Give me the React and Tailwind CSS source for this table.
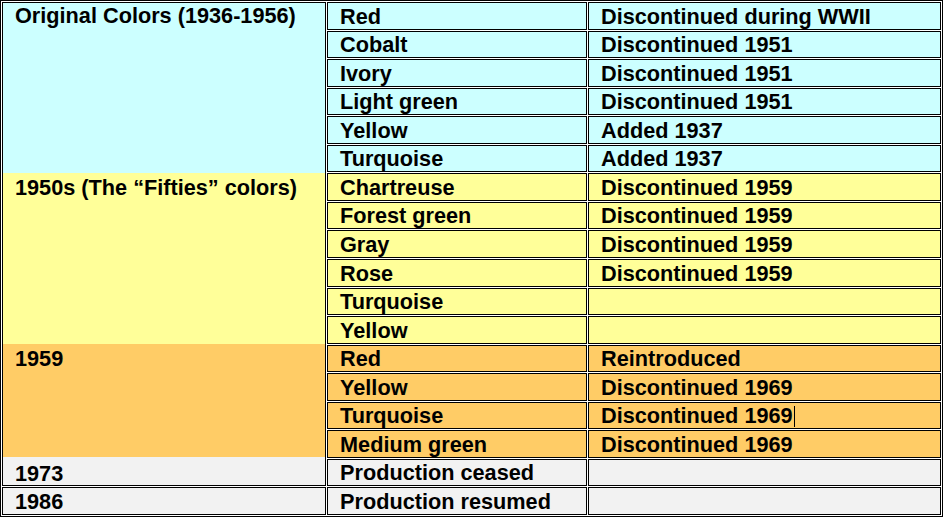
import React from "react";

const rows = [
  ["Red", "Discontinued during WWII", "b"],
  ["Cobalt", "Discontinued 1951", "b"],
  ["Ivory", "Discontinued 1951", "b"],
  ["Light green", "Discontinued 1951", "b"],
  ["Yellow", "Added 1937", "b"],
  ["Turquoise", "Added 1937", "b"],
  ["Chartreuse", "Discontinued 1959", "y"],
  ["Forest green", "Discontinued 1959", "y"],
  ["Gray", "Discontinued 1959", "y"],
  ["Rose", "Discontinued 1959", "y"],
  ["Turquoise", "", "y"],
  ["Yellow", "", "y"],
  ["Red", "Reintroduced", "o"],
  ["Yellow", "Discontinued 1969", "o"],
  ["Turquoise", "Discontinued 1969", "o", true],
  ["Medium green", "Discontinued 1969", "o"],
  ["Production ceased", "", "g"],
  ["Production resumed", "", "g"],
];

const bg = {
  b: "bg-[#ccffff]",
  y: "bg-[#ffff99]",
  o: "bg-[#ffcc66]",
  g: "bg-[#f2f2f2]",
};

function Cell({ children, color, cursor }) {
  return (
    <div className={`border border-black ${bg[color]} flex items-center px-3 pt-[2px] whitespace-nowrap`}>
      {children}
      {cursor && <span className="inline-block w-px h-[21px] bg-black ml-px" />}
    </div>
  );
}

function Seg({ color, grow, label, offset }) {
  return (
    <div className={`${bg[color]} ${grow} min-h-0`}>
      <div className={`h-[25.5px] flex items-center px-3 pt-[2px] whitespace-nowrap ${offset}`}>{label}</div>
    </div>
  );
}

export default function App() {
  return (
    <div className="w-[945px] h-[521px] bg-white">
      <div
        className="w-[943px] h-[517px] border border-black p-px bg-white text-black font-bold text-[21.7px]"
        style={{ fontFamily: '"Liberation Sans", Arial, sans-serif' }}
      >
        <div className="grid h-full grid-cols-[324px_260px_353px] grid-rows-[repeat(18,minmax(0,1fr))] gap-px">
          <div className="col-start-1 row-start-1 row-span-17 border border-black flex flex-col">
            <Seg color="b" grow="flex-[6_6_0%]" offset="mt-0" label="Original Colors (1936-1956)" />
            <Seg color="y" grow="flex-[6_6_0%]" offset="mt-[1px]" label="1950s (The “Fifties” colors)" />
            <Seg color="o" grow="flex-[4_4_0%]" offset="mt-[2px]" label="1959" />
            <Seg color="g" grow="flex-[1_1_0%]" offset="mt-[3px]" label="1973" />
          </div>
          {rows.map((r, i) => (
            <React.Fragment key={i}>
              {i === 17 && <Cell color="g">1986</Cell>}
              <Cell color={r[2]}>{r[0]}</Cell>
              <Cell color={r[2]} cursor={r[3]}>{r[1]}</Cell>
            </React.Fragment>
          ))}
        </div>
      </div>
    </div>
  );
}
